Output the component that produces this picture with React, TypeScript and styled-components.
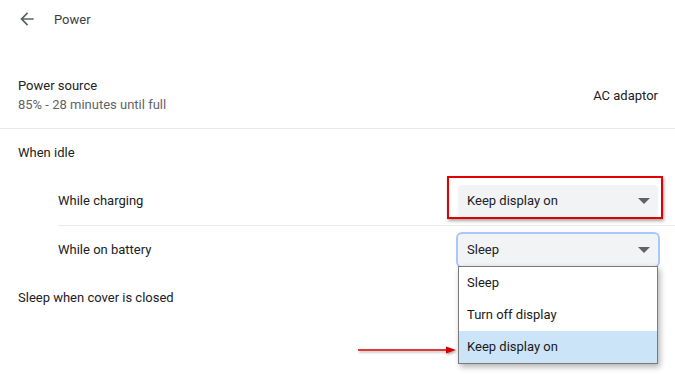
import styled, { createGlobalStyle } from 'styled-components';

const GlobalStyle = createGlobalStyle`
  html, body {
    margin: 0;
    padding: 0;
    background: #ffffff;
  }
  body {
    font-family: Roboto, "Liberation Sans", sans-serif;
    font-size: 13px;
    color: #202124;
  }
`;

const Page = styled.div`
  width: 675px;
  height: 385px;
  overflow: hidden;
  position: relative;
`;

const Header = styled.div`
  display: flex;
  align-items: center;
  height: 38px;
  padding-left: 17px;
  margin-bottom: 24px;
`;

const BackIcon = styled.svg`
  width: 20px;
  height: 20px;
  margin-right: 17px;
  fill: #5f6368;
`;

const Title = styled.div`
  font-size: 13px;
  color: #3c4043;
`;

const Row = styled.div<{ $indent?: boolean; $h?: number; $divider?: 'full' | 'inset' }>`
  display: flex;
  align-items: center;
  justify-content: space-between;
  height: ${p => p.$h ?? 48}px;
  padding: 0 17px 0 ${p => (p.$indent ? '58px' : '18px')};
  box-sizing: border-box;
  position: relative;
  border-bottom: ${p => (p.$divider ? '1px solid #e8eaed' : 'none')};
  margin-left: ${p => (p.$divider === 'inset' ? '58px' : '0')};
  padding-left: ${p => (p.$divider === 'inset' ? '0' : p.$indent ? '58px' : '18px')};
`;

const LabelBlock = styled.div`
  display: flex;
  flex-direction: column;
  gap: 4px;
`;

const Label = styled.div`
  color: #202124;
`;

const Secondary = styled.div`
  color: #5f6368;
`;

const SelectWrap = styled.div`
  position: relative;
  width: 200px;
`;

const SelectBox = styled.div<{ $focused?: boolean }>`
  display: flex;
  align-items: center;
  justify-content: space-between;
  height: 32px;
  padding: 0 8px 0 9px;
  box-sizing: border-box;
  background: #f1f3f4;
  border-radius: 4px;
  color: #202124;
  box-shadow: ${p => (p.$focused ? '0 0 0 2px #a8c7fa' : 'none')};
`;

const Caret = styled.span`
  width: 0;
  height: 0;
  border-left: 6px solid transparent;
  border-right: 6px solid transparent;
  border-top: 6px solid #5f6368;
`;

const Highlight = styled.div`
  position: absolute;
  left: -11px;
  right: -5px;
  top: -9px;
  bottom: -2px;
  border: 2px solid #e00000;
  box-shadow: 1px 2px 3px rgba(0, 0, 0, 0.35);
  pointer-events: none;
`;

const Menu = styled.div`
  position: absolute;
  top: 32px;
  left: 0;
  width: 200px;
  background: #ffffff;
  border: 1px solid #7a7a7a;
  box-sizing: border-box;
  box-shadow: 2px 3px 6px rgba(0, 0, 0, 0.3);
  z-index: 2;
`;

const MenuItem = styled.div<{ $active?: boolean }>`
  height: 32px;
  display: flex;
  align-items: center;
  padding-left: 8px;
  color: #1a1a1a;
  background: ${p => (p.$active ? '#cce4f7' : 'transparent')};
`;

const Pointer = styled.svg`
  position: absolute;
  left: -101px;
  top: 77px;
  width: 100px;
  height: 12px;
  overflow: visible;
`;

function Select({ value, focused, highlighted, options }: {
  value: string;
  focused?: boolean;
  highlighted?: boolean;
  options?: string[];
}) {
  return (
    <SelectWrap>
      <SelectBox $focused={focused}>
        <span>{value}</span>
        <Caret />
      </SelectBox>
      {highlighted && <Highlight />}
      {options && (
        <Menu>
          {options.map(o => (
            <MenuItem key={o} $active={o === 'Keep display on'}>{o}</MenuItem>
          ))}
          <Pointer viewBox="0 0 100 12">
            <defs>
              <filter id="sh" x="-10%" y="-50%" width="120%" height="200%">
                <feDropShadow dx="1" dy="1.5" stdDeviation="1" floodOpacity="0.35" />
              </filter>
            </defs>
            <g filter="url(#sh)">
              <line x1="0" y1="6" x2="90" y2="6" stroke="#d40000" strokeWidth="1.6" />
              <polygon points="88,2.5 98,6 88,9.5" fill="#d40000" />
            </g>
          </Pointer>
        </Menu>
      )}
    </SelectWrap>
  );
}

function App() {
  return (
    <Page>
      <GlobalStyle />
      <Header>
        <BackIcon viewBox="0 0 24 24">
          <path d="M20 11H7.83l5.59-5.59L12 4l-8 8 8 8 1.41-1.41L7.83 13H20v-2z" />
        </BackIcon>
        <Title>Power</Title>
      </Header>

      <Row $h={67} $divider="full">
        <LabelBlock>
          <Label>Power source</Label>
          <Secondary>85% - 28 minutes until full</Secondary>
        </LabelBlock>
        <Label>AC adaptor</Label>
      </Row>

      <Row $h={47}>
        <Label>When idle</Label>
      </Row>

      <Row $h={50} $divider="inset">
        <Label>While charging</Label>
        <Select value="Keep display on" highlighted />
      </Row>

      <Row $h={47} $indent>
        <Label>While on battery</Label>
        <Select
          value="Sleep"
          focused
          options={['Sleep', 'Turn off display', 'Keep display on']}
        />
      </Row>

      <Row>
        <Label>Sleep when cover is closed</Label>
      </Row>
    </Page>
  );
}

export default App;
